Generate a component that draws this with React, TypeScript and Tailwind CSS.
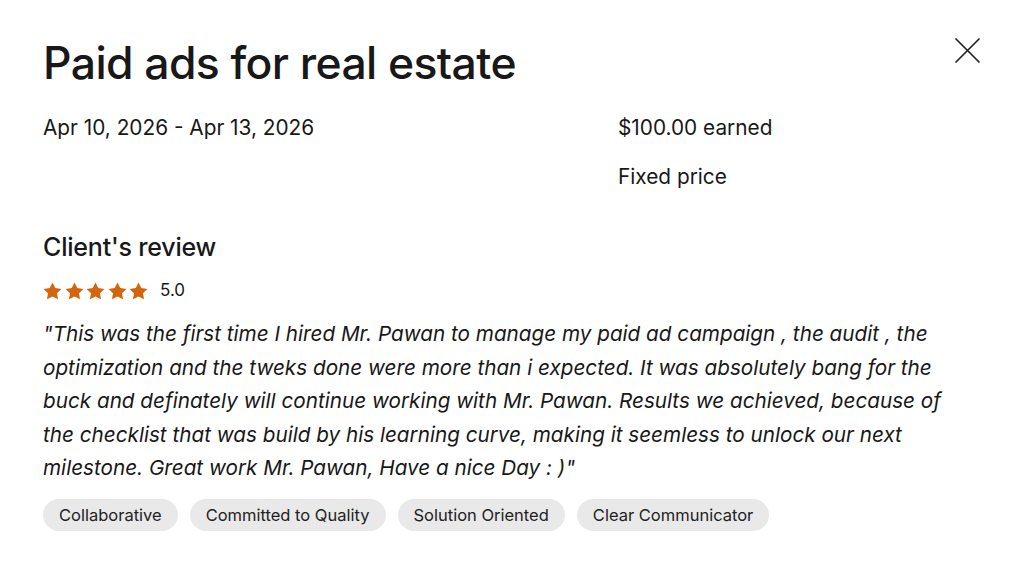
import React from "react";

const Star = () => (
  <svg width="19" height="18" viewBox="0 0 24 23" className="block">
    <path d="M12 0.5l3.5 7.2 7.9 1.1-5.7 5.5 1.4 7.8L12 18.4 4.9 22.1l1.4-7.8L0.6 8.8l7.9-1.1z" fill="#d4650e" />
  </svg>
);

export default function App() {
  const tags = ["Collaborative", "Committed to Quality", "Solution Oriented", "Clear Communicator"];
  return (
    <div className="w-[1024px] h-[564px] bg-white text-[#181818] overflow-hidden" style={{ fontFamily: 'Inter, "Liberation Sans", Arial, sans-serif' }}>
      <div className="pl-[43px] pr-[44px] pt-[36px]">
        <div className="flex items-start justify-between">
          <h1 className="text-[44.5px] leading-[54px] font-medium tracking-[-0.6px]">Paid ads for real estate</h1>
          <svg width="25" height="25" viewBox="0 0 25 25" className="mt-[2px]">
            <path d="M1 1L24 24M24 1L1 24" stroke="#222" strokeWidth="1.7" strokeLinecap="round" />
          </svg>
        </div>
        <div className="flex mt-[24px] text-[20.8px] leading-[28px]">
          <div className="w-[575px]">Apr 10, 2026 - Apr 13, 2026</div>
          <div className="flex flex-col gap-[21px]">
            <div>$100.00 earned</div>
            <div>Fixed price</div>
          </div>
        </div>
        <h2 className="mt-[40px] text-[25px] leading-[32px] font-medium tracking-[-0.2px]">Client's review</h2>
        <div className="flex items-center mt-[16px] h-[24px]">
          <div className="flex gap-[2.5px]">
            <Star /><Star /><Star /><Star /><Star />
          </div>
          <span className="ml-[12px] text-[17px]">5.0</span>
        </div>
        <p className="mt-[14px] text-[20.7px] leading-[33.6px] italic w-[925px]">
          "This was the first time I hired Mr. Pawan to manage my paid ad campaign , the audit , the optimization and the tweks done were more than i expected. It was absolutely bang for the buck and definately will continue working with Mr. Pawan. Results we achieved, because of the checklist that was build by his learning curve, making it seemless to unlock our next milestone. Great work Mr. Pawan, Have a nice Day : )"
        </p>
        <div className="flex gap-[12px] mt-[14px]">
          {tags.map((t) => (
            <span key={t} className="h-[32px] px-[16px] rounded-full bg-[#e9e9e9] text-[16.5px] flex items-center text-[#222]">{t}</span>
          ))}
        </div>
      </div>
    </div>
  );
}
